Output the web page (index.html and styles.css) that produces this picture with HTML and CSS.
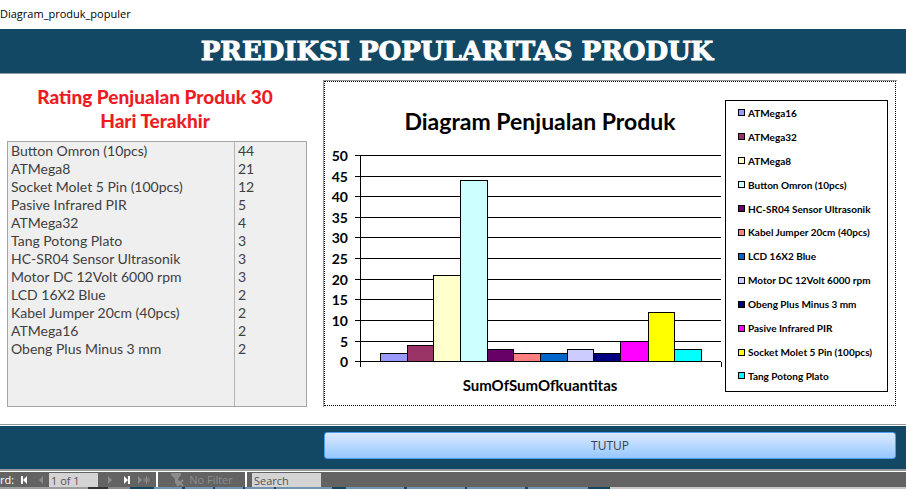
FILE: index.html
```html
<!DOCTYPE html>
<html lang="id">
<head>
<meta charset="utf-8">
<title>Diagram_produk_populer</title>
<link rel="stylesheet" href="styles.css">
</head>
<body>
<div class="caption">Diagram_produk_populer</div>
<header class="banner"><h1>PREDIKSI POPULARITAS PRODUK</h1></header>
<main class="content">
  <section class="rating">
    <h2>Rating Penjualan Produk 30 Hari Terakhir</h2>
    <table class="list">
      <tbody>
        <tr><td>Button Omron (10pcs)</td><td>44</td></tr>
        <tr><td>ATMega8</td><td>21</td></tr>
        <tr><td>Socket Molet 5 Pin (100pcs)</td><td>12</td></tr>
        <tr><td>Pasive Infrared PIR</td><td>5</td></tr>
        <tr><td>ATMega32</td><td>4</td></tr>
        <tr><td>Tang Potong Plato</td><td>3</td></tr>
        <tr><td>HC-SR04 Sensor Ultrasonik</td><td>3</td></tr>
        <tr><td>Motor DC 12Volt 6000 rpm</td><td>3</td></tr>
        <tr><td>LCD 16X2 Blue</td><td>2</td></tr>
        <tr><td>Kabel Jumper 20cm (40pcs)</td><td>2</td></tr>
        <tr><td>ATMega16</td><td>2</td></tr>
        <tr><td>Obeng Plus Minus 3 mm</td><td>2</td></tr>
        <tr class="rest"><td></td><td></td></tr>
      </tbody>
    </table>
  </section>
  <section class="chart">
    <div class="plot">
      <h2>Diagram Penjualan Produk</h2>
      <svg viewBox="0 0 396 224" role="img" aria-label="Diagram Penjualan Produk">
        <g class="grid">
          <path d="M29 10.5H395M29 31.500H395M29 51.500H395M29 72.500H395M29 92.500H395M29 113.500H395M29 134.500H395M29 154.500H395M29 175.500H395M29 196.500H395M29 216.500H395M34.500 10V222M395.500 217V222"/>
        </g>
        <g class="ticks">
          <text x="22" y="16">50</text><text x="22" y="37">45</text><text x="22" y="57">40</text>
          <text x="22" y="78">35</text><text x="22" y="98">30</text><text x="22" y="119">25</text>
          <text x="22" y="140">20</text><text x="22" y="160">15</text><text x="22" y="181">10</text>
          <text x="22" y="202">5</text><text x="22" y="222">0</text>
        </g>
        <g class="bars">
          <rect x="54.500" y="208.500" width="27" height="8" fill="#9999ff"/>
          <rect x="81.500" y="200.500" width="26" height="16" fill="#993366"/>
          <rect x="107.500" y="130.500" width="27" height="86" fill="#ffffcc"/>
          <rect x="134.500" y="35.500" width="27" height="181" fill="#ccffff"/>
          <rect x="161.500" y="204.500" width="26" height="12" fill="#660066"/>
          <rect x="187.500" y="208.500" width="27" height="8" fill="#ff8080"/>
          <rect x="214.500" y="208.500" width="27" height="8" fill="#0066cc"/>
          <rect x="241.500" y="204.500" width="26" height="12" fill="#ccccff"/>
          <rect x="267.500" y="208.500" width="27" height="8" fill="#000080"/>
          <rect x="294.500" y="196.500" width="28" height="20" fill="#ff00ff"/>
          <rect x="322.500" y="167.500" width="26" height="49" fill="#ffff00"/>
          <rect x="348.500" y="204.500" width="27" height="12" fill="#00ffff"/>
        </g>
      </svg>
      <p class="axis">SumOfSumOfkuantitas</p>
    </div>
    <ul class="legend">
      <li><i class="key k1"></i>ATMega16</li>
      <li><i class="key k2"></i>ATMega32</li>
      <li><i class="key k3"></i>ATMega8</li>
      <li><i class="key k4"></i>Button Omron (10pcs)</li>
      <li><i class="key k5"></i>HC-SR04 Sensor Ultrasonik</li>
      <li><i class="key k6"></i>Kabel Jumper 20cm (40pcs)</li>
      <li><i class="key k7"></i>LCD 16X2 Blue</li>
      <li><i class="key k8"></i>Motor DC 12Volt 6000 rpm</li>
      <li><i class="key k9"></i>Obeng Plus Minus 3 mm</li>
      <li><i class="key k10"></i>Pasive Infrared PIR</li>
      <li><i class="key k11"></i>Socket Molet 5 Pin (100pcs)</li>
      <li><i class="key k12"></i>Tang Potong Plato</li>
    </ul>
  </section>
</main>
<footer class="actions"><button class="close" type="button">TUTUP</button></footer>
<nav class="records">
  <label class="rec" for="pos">rd:</label>
  <button type="button" aria-label="First record"><svg width="8" height="8"><path d="M1 0h2v8H1zM7 0v8L3 4z"/></svg></button>
  <button type="button" class="off" aria-label="Previous record"><svg width="8" height="8"><path d="M6 0v8L2 4z"/></svg></button>
  <input id="pos" class="pos" type="text" value="1 of 1">
  <button type="button" class="off" aria-label="Next record"><svg width="8" height="8"><path d="M2 0v8l4-4z"/></svg></button>
  <button type="button" aria-label="Last record"><svg width="8" height="8"><path d="M5 0h2v8H5zM1 0v8l4-4z"/></svg></button>
  <button type="button" class="off new" aria-label="New record"><svg width="14" height="8"><path d="M1 0v8l4-4z"/><path class="star" d="M9.500 0v8M6 4h7M7 1.500l5 5M12 1.500l-5 5"/></svg></button>
  <button type="button" class="filter off"><svg width="15" height="14"><path d="M1 0h10v2L8 6v7L5 10V6L1 2z"/><path class="cross" d="M7 7l6 6M13 7l-6 6"/></svg>No Filter</button>
  <input class="search" type="text" placeholder="Search" aria-label="Search">
</nav>
<div class="under"></div>
</body>
</html>
```
FILE: styles.css
```css
* { box-sizing: border-box; }
html, body { height: 100%; }
body {
  margin: 0;
  display: flex;
  flex-direction: column;
  background: #fff;
  font-family: "Open Sans", "Noto Sans", sans-serif;
  overflow: hidden;
}
h1, h2, p, ul { margin: 0; padding: 0; }
button, input { font: inherit; border: 0; padding: 0; margin: 0; }

.caption { flex: none; height: 29px; font-size: 11px; line-height: 28px; color: #000; }

.banner {
  flex: none;
  height: 45px;
  background: #124863;
  border-bottom: 1px solid #8b9aa2;
  text-align: center;
  padding-left: 8px;
}
.banner h1 {
  font: bold 26px/45px "DejaVu Serif", serif;
  color: #fff;
  -webkit-text-stroke: 1px #fff;
}

.content {
  flex: 1;
  display: flex;
  gap: 16px;
  padding: 6px 9px 17px 7px;
}

.rating { flex: 0 0 300px; display: flex; flex-direction: column; }
.rating h2 {
  font: 900 19px/24px Lato, sans-serif;
  color: #ed1c24;
  text-align: center;
  padding: 5px 22px 8px 18px;
}
.list {
  flex: 1;
  display: flex;
  background: #efefef;
  border: 1px solid #a5a5a5;
  border-collapse: collapse;
  font: 14px/18px Lato, sans-serif;
  color: #404040;
}
.list tbody { flex: 1; display: flex; flex-direction: column; }
.list tr { display: flex; height: 18px; }
.list tr.rest { flex: 1; }
.list td { flex: 1; padding: 0 3px; }
.list td:first-child { flex: 0 0 227px; border-right: 1px solid #b4b4b4; }

.chart {
  flex: 1;
  display: flex;
  border: 1px solid #969696;
  border-right: 0;
  border-bottom: 0;
  outline: 1px dotted #000;
  outline-offset: -2px;
  padding: 19px 9px 8px 2px;
}
.plot { flex: 1; color: #000; font-family: Lato, sans-serif; }
.plot h2 {
  font: bold 23px/42px Lato, sans-serif;
  text-align: center;
  padding: 0 0 3px 32px;
}
.plot svg { display: block; width: 100%; }
.grid path { stroke: #000; fill: none; }
.ticks text { font: bold 14px Lato, sans-serif; text-anchor: end; }
.bars rect { stroke: #000; }
.axis {
  font: bold 15px/18px Lato, sans-serif;
  text-align: center;
  padding: 7px 0 0 32px;
}

.legend {
  flex: 0 0 163px;
  margin: 0 0 7px 3px;
  border: 1px solid #000;
  list-style: none;
  display: flex;
  flex-direction: column;
  justify-content: space-around;
  padding: 0 0 3px 12px;
  font: bold 10px/12px Lato, sans-serif;
  color: #000;
}
.legend li { display: flex; align-items: center; gap: 3px; white-space: nowrap; }
.key { width: 7px; height: 7px; border: 1px solid #000; }
.k1 { background: #9999ff; }
.k2 { background: #993366; }
.k3 { background: #ffffcc; }
.k4 { background: #ccffff; }
.k5 { background: #660066; }
.k6 { background: #ff8080; }
.k7 { background: #0066cc; }
.k8 { background: #ccccff; }
.k9 { background: #000080; }
.k10 { background: #ff00ff; }
.k11 { background: #ffff00; }
.k12 { background: #00ffff; }

.actions {
  flex: none;
  height: 47px;
  display: flex;
  background: #124863;
  border-top: 1px solid #969696;
  border-bottom: 2px solid #969c9f;
  box-shadow: inset 0 1px #fff;
  padding: 7px 10px 10px 324px;
}
.close {
  flex: 1;
  border: 1px solid #4d9df0;
  border-radius: 3px;
  background: linear-gradient(#dbe9ff, #95c8ff);
  color: #404040;
  font-size: 12px;
}

.records {
  flex: none;
  height: 16px;
  display: flex;
  align-items: stretch;
  background: #636363;
  border-top: 1px solid #fff;
  color: #fff;
  font-size: 11px;
  line-height: 15px;
}
.records button {
  width: 17px;
  background: none;
  color: inherit;
  display: flex;
  align-items: center;
  justify-content: center;
}
.records svg { fill: currentColor; }
.records .off { color: #8c8c8c; }
.records .new { width: 18px; margin-right: 3px; }
.star { stroke: currentColor; }
.cross { stroke: currentColor; stroke-width: 2; }
.rec { width: 15px; }
.records .filter {
  width: 91px;
  gap: 4px;
  border-left: 2px solid #fff;
  border-right: 2px solid #fff;
}
.pos, .search { background: #d4d4d4; color: #555; height: 14px; margin-top: 1px; }
.pos { width: 49px; padding-left: 2px; margin-right: 3px; }
.search { width: 69px; margin-left: 5px; padding-left: 2px; }
.search::placeholder { color: #555; opacity: 1; }

.under {
  flex: none;
  height: 2px;
  background: linear-gradient(90deg,
    #a0a0a0 0 88px, #333 88px 108px, #888 108px 130px,
    #124863 130px 154px, #7295b5 154px 182px, #124863 182px 185px,
    #7295b5 185px 213px, #124863 213px 215px, #7295b5 215px 243px,
    #124863 243px 245px, #7295b5 245px 274px, #124863 274px 276px,
    #7295b5 276px 332px, #124863 332px 346px, #7295b5 346px 404px,
    #124863 404px 407px, #7295b5 407px 465px, #124863 465px 467px,
    #7295b5 467px 525px, #124863 525px 528px, #7295b5 528px 588px,
    #124863 588px 610px, #c8c8c8 610px);
}
```
